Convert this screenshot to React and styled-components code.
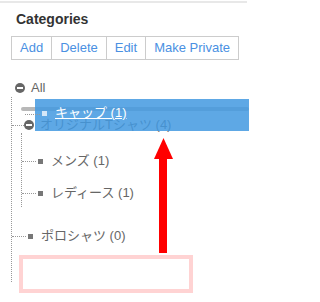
import styled, { createGlobalStyle } from "styled-components";

const GlobalStyle = createGlobalStyle`
  html, body {
    margin: 0;
    padding: 0;
    background: #fff;
  }
  body {
    font-family: "Liberation Sans", Arial, "Noto Sans CJK JP", sans-serif;
    font-size: 13px;
    color: #666;
  }
`;

const Page = styled.div`
  position: relative;
  width: 249px;
  height: 302px;
  overflow: hidden;
`;

const TopRule = styled.div`
  margin-top: 1px;
  width: 247px;
  height: 2px;
  background: #e8e8e8;
`;

const Panel = styled.div`
  padding-left: 11px;
`;

const Title = styled.h3`
  margin: 8px 0 0 5px;
  font-size: 14px;
  line-height: 16px;
  font-weight: bold;
  color: #333;
`;

const ButtonGroup = styled.div`
  display: inline-flex;
  margin-top: 9px;
`;

const ToolButton = styled.button`
  height: 24px;
  padding: 0 8px;
  margin: 0;
  margin-left: -1px;
  border: 1px solid #ccc;
  background: #fff;
  color: #4a90e2;
  font-family: inherit;
  font-size: 13px;
  line-height: 22px;
  cursor: pointer;

  &:first-child {
    margin-left: 0;
  }
`;

const Tree = styled.div`
  position: relative;
  margin-top: 19px;
`;

const RootRow = styled.div`
  display: flex;
  align-items: center;
  gap: 6px;
  height: 18px;
  padding-left: 4px;
  line-height: 18px;
`;

const Branch = styled.div`
  display: flex;
  flex-direction: column;
  margin-left: ${(p) => p.$indent || 0}px;
  padding-top: ${(p) => p.$padTop || 0}px;
  padding-bottom: ${(p) => p.$padBottom || 0}px;
  border-left: 1px dotted #999;
`;

const Row = styled.div`
  display: flex;
  align-items: center;
  height: ${(p) => p.$height || 20}px;
  margin-top: ${(p) => p.$gap || 0}px;
  line-height: ${(p) => p.$height || 20}px;
  white-space: nowrap;
`;

const Connector = styled.span`
  width: ${(p) => p.$width}px;
  border-top: 1px dotted #999;
  margin-right: ${(p) => p.$space || 0}px;
`;

const Toggle = styled.span`
  position: relative;
  flex: none;
  width: 10px;
  height: 10px;
  border-radius: 50%;
  background: #666;
  margin-right: ${(p) => p.$space || 0}px;

  &::after {
    content: "";
    position: absolute;
    left: 2px;
    top: 4px;
    width: 6px;
    height: 2px;
    background: #fff;
  }
`;

const Bullet = styled.span`
  flex: none;
  width: 5px;
  height: 5px;
  background: ${(p) => p.$color || "#777"};
  margin-right: 8px;
`;

const DropLine = styled.div`
  margin: 10px 0 0 9px;
  height: 4px;
  border-radius: 2px;
  background: #b8b8b8;
`;

const Placeholder = styled.div`
  box-sizing: border-box;
  width: 174px;
  height: 38px;
  margin: 9px 0 -11px 7px;
  border: 4px solid #ffd3d3;
  background: #fff;
`;

const DragHelper = styled.div`
  position: absolute;
  left: 24px;
  right: 0;
  top: 20px;
  height: 32px;
  display: flex;
  align-items: flex-start;
  padding: 5px 0 0 7px;
  box-sizing: border-box;
  background: rgba(66, 153, 225, 0.85);

  &::before {
    content: "";
    position: absolute;
    left: -10px;
    top: 15px;
    width: 15px;
    border-top: 1px dotted #999;
  }
`;

const HelperBullet = styled(Bullet)`
  margin-top: 7px;
`;

const HelperLabel = styled.span`
  color: #fff;
  line-height: 18px;
  text-decoration: underline;
  white-space: nowrap;
`;

const Arrow = styled.svg`
  position: absolute;
  left: 154px;
  top: 138px;
`;

const buttons = ["Add", "Delete", "Edit", "Make Private"];

function App() {
  return (
    <Page>
      <GlobalStyle />
      <TopRule />
      <Panel>
        <Title>Categories</Title>
        <ButtonGroup>
          {buttons.map((b) => (
            <ToolButton key={b}>{b}</ToolButton>
          ))}
        </ButtonGroup>

        <Tree>
          <RootRow>
            <Toggle />
            <span>All</span>
          </RootRow>
          <Branch>
            <DropLine />
            <Row $gap={6} $height={16}>
              <Connector $width={12} />
              <Toggle $space={6} />
              オリジナルTシャツ (4)
            </Row>
            <Branch $indent={9} $padTop={18} $padBottom={4}>
              <Row>
                <Connector $width={14} $space={2} />
                <Bullet />
                メンズ (1)
              </Row>
              <Row $gap={12}>
                <Connector $width={14} $space={2} />
                <Bullet />
                レディース (1)
              </Row>
            </Branch>
            <Row $gap={19}>
              <Connector $width={14} $space={2} />
              <Bullet />
              ポロシャツ (0)
            </Row>
            <Placeholder />
          </Branch>

          <DragHelper>
            <HelperBullet $color="#d4e7f8" />
            <HelperLabel>キャップ (1)</HelperLabel>
          </DragHelper>
        </Tree>
      </Panel>

      <Arrow width="19" height="115" viewBox="0 0 19 115">
        <polygon points="9.5,0 19,21 0,21" fill="#ff0000" />
        <rect x="5" y="20" width="8" height="95" fill="#ff0000" />
      </Arrow>
    </Page>
  );
}

export default App;
